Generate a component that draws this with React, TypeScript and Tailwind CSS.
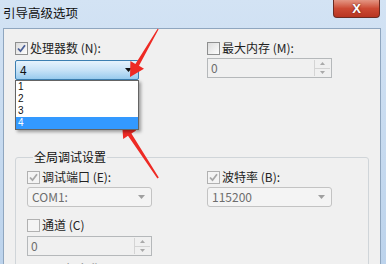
import React from 'react'

const font = { fontFamily: '"Noto Sans CJK SC", "Liberation Sans", sans-serif' }

const Check = ({ checked, disabled }: { checked?: boolean; disabled?: boolean }) => (
  <span
    className={`w-[13px] h-[13px] shrink-0 border flex items-center justify-center ${
      disabled ? 'border-[#b1b1b1] bg-[#f4f4f4]' : 'border-[#8e8f8f] bg-gradient-to-br from-[#dcdcdc] to-[#fdfdfd]'
    }`}
  >
    {checked && (
      <svg width="11" height="11" viewBox="0 0 11 11">
        <path
          d="M2 5.5 L4.5 8.2 L9 2.2"
          fill="none"
          stroke={disabled ? '#a8a8a8' : '#4a5f97'}
          strokeWidth="1.8"
        />
      </svg>
    )}
  </span>
)

const CheckRow = ({ label, checked, disabled }: { label: string; checked?: boolean; disabled?: boolean }) => (
  <div className="flex items-center gap-[2px] h-[16px]">
    <Check checked={checked} disabled={disabled} />
    <span className="text-[12px] leading-[16px] text-[#222]">{label}</span>
  </div>
)

const DisabledCombo = ({ value }: { value: string }) => (
  <div className="h-[20px] border border-[#c3c3c3] rounded-[3px] bg-[#f4f4f4] flex items-center pl-[4px] pr-[6px]">
    <span className="text-[12px] text-[#6d6d6d] flex-1">{value}</span>
    <svg width="7" height="4" viewBox="0 0 7 4">
      <path d="M0 0 L7 0 L3.5 4 Z" fill="#a0a0a0" />
    </svg>
  </div>
)

const Spin = ({ value }: { value: string }) => (
  <div className="h-[20px] border border-[#b5b8ba] bg-[#f0f0f0] flex items-stretch">
    <span className="text-[12px] leading-[18px] text-[#6d6d6d] flex-1 pl-[3px]">{value}</span>
    <div className="w-[16px] flex flex-col border-l border-[#d4d4d4] my-[1px] mr-[1px]">
      <div className="flex-1 flex items-center justify-center border-b border-[#d4d4d4]">
        <svg width="5" height="3" viewBox="0 0 5 3">
          <path d="M0 3 L5 3 L2.5 0 Z" fill="#a9a9a9" />
        </svg>
      </div>
      <div className="flex-1 flex items-center justify-center">
        <svg width="5" height="3" viewBox="0 0 5 3">
          <path d="M0 0 L5 0 L2.5 3 Z" fill="#a9a9a9" />
        </svg>
      </div>
    </div>
  </div>
)

export default function App() {
  return (
    <div className="w-[386px] h-[264px] overflow-hidden relative bg-gradient-to-b from-[#d3e3f4] to-[#bcd3ec] flex flex-col" style={font}>
      <div className="h-[28px] shrink-0 flex items-start">
        <span className="pl-[3px] pt-[5px] text-[12.5px] leading-[16px] text-[#111]">引导高级选项</span>
        <div className="ml-auto mr-[6px] w-[47px] h-[18px] rounded-b-[4px] border border-t-0 border-[#6b2b22] bg-gradient-to-b from-[#e39583] via-[#cc4a34] to-[#b83521] flex items-center justify-center">
          <span className="text-white font-bold text-[13px] leading-[13px] [text-shadow:0_0_2px_#5a1a10]" style={{ fontFamily: '"Liberation Sans", sans-serif' }}>
            X
          </span>
        </div>
      </div>

      <div className="flex-1 ml-[3px] mr-[5px] border border-b-0 border-[#8fa6bf] bg-[#f0f0f0] relative">
        <div className="flex pl-[11px] pt-[11px]">
          <div className="w-[124px] flex flex-col">
            <CheckRow label="处理器数 (N):" checked />
            <div className="relative mt-[4px]">
              <div className="h-[20px] border border-[#3c7fb1] rounded-[2px] bg-gradient-to-b from-[#e6f3fc] via-[#c8e3f7] to-[#98cbee] flex items-center pl-[4px] pr-[6px]">
                <span className="text-[12px] text-[#111] flex-1">4</span>
                <svg width="7" height="4" viewBox="0 0 7 4">
                  <path d="M0 0 L7 0 L3.5 4 Z" fill="#111" />
                </svg>
              </div>
              <div className="absolute left-0 top-[20px] w-[124px] border border-[#646464] bg-white shadow-[2px_2px_3px_rgba(0,0,0,0.35)] z-10">
                {['1', '2', '3', '4'].map((n) => (
                  <div
                    key={n}
                    className={`h-[12px] flex items-center text-[10px] leading-[10px] pl-[2px] font-['Liberation_Sans',sans-serif] ${
                      n === '4' ? 'bg-[#3399ff] text-white' : 'text-[#111]'
                    }`}
                  >
                    {n}
                  </div>
                ))}
              </div>
            </div>
          </div>
          <div className="w-[125px] ml-[68px] flex flex-col">
            <CheckRow label="最大内存 (M):" />
            <div className="mt-[2px]">
              <Spin value="0" />
            </div>
          </div>
        </div>

        <fieldset className="mx-[11px] mt-[70px] border border-[#d0d5d9] rounded-[3px] pl-[11px] pt-[5px] pb-[10px]">
          <legend className="ml-[6px] px-[1px] text-[12px] leading-[14px] text-[#111]">全局调试设置</legend>
          <div className="flex">
            <div className="w-[125px] flex flex-col">
              <CheckRow label="调试端口 (E):" checked disabled />
              <div className="mt-[2px]">
                <DisabledCombo value="COM1:" />
              </div>
              <div className="mt-[10px]">
                <CheckRow label="通道 (C)" disabled />
              </div>
              <div className="mt-[3px]">
                <Spin value="0" />
              </div>
              <div className="mt-[5px] text-[12px] leading-[16px] text-[#8a8a8a]">USB 目标名称:</div>
            </div>
            <div className="w-[125px] ml-[55px] flex flex-col">
              <CheckRow label="波特率 (B):" checked disabled />
              <div className="mt-[2px]">
                <DisabledCombo value="115200" />
              </div>
            </div>
          </div>
        </fieldset>
      </div>

      <svg className="absolute left-0 top-0 pointer-events-none" width="386" height="264" viewBox="0 0 386 264">
        <polygon
          points="158.6,29.3 139,65.8 144,68.8 130,77 130.4,61 135.4,63.9 157.6,28.7"
          fill="#ee2a24"
        />
        <polygon
          points="158.8,177.6 131.4,133.6 136.2,130.4 122,123 123.2,139 128,135.8 157.4,178.4"
          fill="#ee2a24"
        />
      </svg>
    </div>
  )
}
